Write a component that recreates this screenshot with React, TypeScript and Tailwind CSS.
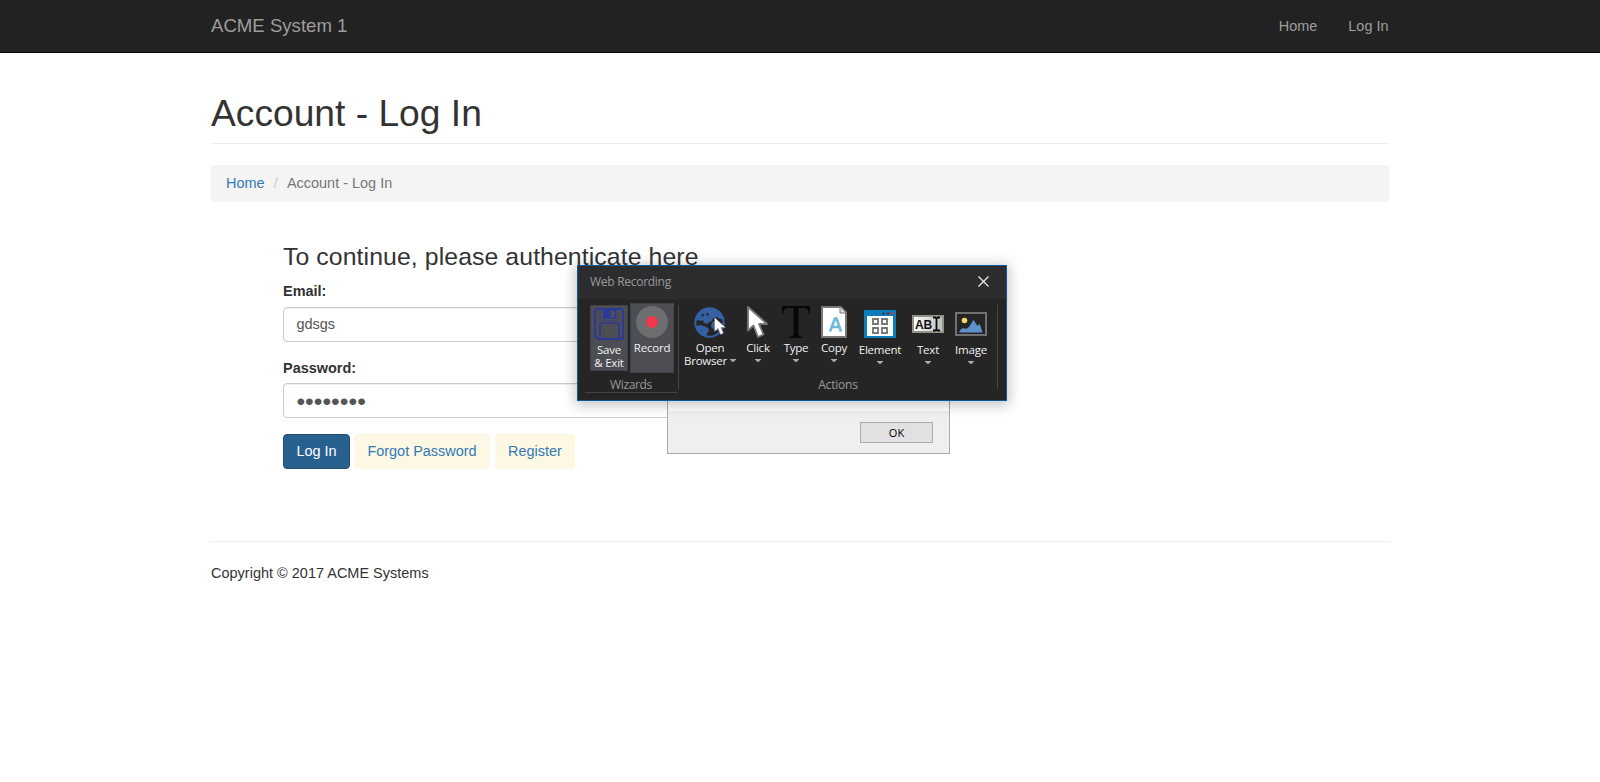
import type { ReactNode } from 'react';

function Arrow({ className = '' }: { className?: string }) {
  return (
    <svg className={`h-[3px] w-[6px] shrink-0 ${className}`} viewBox="0 0 6 3">
      <path d="M0 0h6v.6L3.500 3h-1L0 .6z" fill="#a8a8a8" />
    </svg>
  );
}

type ToolProps = { icon: ReactNode; label: string; className: string };

function Tool({ icon, label, className }: ToolProps) {
  return (
    <div className={`flex shrink-0 flex-col items-center pt-[7px] ${className}`}>
      {icon}
      <span className="mt-[3px] h-[13px] whitespace-nowrap leading-[13px]">{label}</span>
      <Arrow className="mt-[5px]" />
    </div>
  );
}

const cursorPath = 'M1 1v23.500l5.500-5 4.500 11.500 5.500-2.500-4.500-10.500h8z';

function FloppyIcon() {
  return (
    <svg className="h-8 w-[30px] shrink-0" viewBox="0 0 30 32" fill="none" stroke="#2c3a97" strokeWidth="2">
      <path d="M2.500 1h25L29 2.500v27L27.500 31h-23L1 28V2.500z" />
      <path d="M6 1v10.500l1 1h16l1-1V1" strokeWidth="1" strokeOpacity=".45" />
      <path d="M6 31V16l1-1h17l1 1v15" strokeWidth="1.600" />
      <path d="M9 1.500h13V11H9z" fill="#2c3a97" stroke="none" />
      <path d="M17 3h3.500v6.500H17z" fill="#505058" stroke="none" />
    </svg>
  );
}

function RecordIcon() {
  return (
    <svg className="size-8 shrink-0" viewBox="0 0 32 32">
      <circle cx="16" cy="16" r="16" fill="#6d6e6f" />
      <circle cx="16" cy="16" r="6" fill="#f0384f" />
    </svg>
  );
}

function GlobeIcon() {
  return (
    <svg className="h-8 w-8 shrink-0" viewBox="0 0 32 32">
      <circle cx="15.500" cy="16.500" r="14.200" fill="none" stroke="#3560a4" strokeWidth="2" />
      <path d="M5 7C8 3 12 2 16 2c6 0 10 3 12.500 7.500L30 14l-4-1-3-2-4 1-1 3-3 1-2 2-3-1-1-3-2 1-2-1-3 1z" fill="#3560a4" />
      <path d="M2 20l4-1 4 1 4 2 1 3-2 2v3l-5-2-5-4zM18 16l4-1 6 3 1 4-3 3-5-1-4-3z" fill="#3560a4" />
      <path d="M7 9l2-1.500 1.500 1.500-2 2zM12 7.500l2.500-.5.5 2-2 1z" fill="#252d3b" />
      <path d="M20.500 11.500v14l3.500-3 2.500 6 3-1.300-2.500-5.700h4.500z" fill="#fff" stroke="#68717e" strokeWidth=".5" />
    </svg>
  );
}

function ClickIcon() {
  return (
    <svg className="h-8 w-[22px] shrink-0" viewBox="0 0 22 32">
      <path d={cursorPath} fill="#fff" stroke="#777" strokeWidth="1.800" strokeLinejoin="round" />
    </svg>
  );
}

function TypeIcon() {
  return (
    <svg className="h-8 w-7 shrink-0" viewBox="0 0 28 32">
      <path d="M0 0h28v8h-1c-.6-4.500-2-6-6-6h-4.500v25c0 3 1 3.700 4.500 4v1H7v-1c3.500-.3 4.500-1 4.500-4V2H7C3 2 1.600 3.500 1 8H0z" fill="#070707" />
    </svg>
  );
}

function CopyIcon() {
  return (
    <svg className="h-8 w-[26px] shrink-0" viewBox="0 0 26 32">
      <path d="M1 1h18.500L25 6.500V31H1z" fill="#fff" stroke="#777" strokeWidth="2" />
      <path d="M19 1v6h6" fill="#ddd" stroke="#777" strokeWidth="1" />
      <path d="M9 25.500l5-13h1.500l4.500 13M11 21h8" fill="none" stroke="#72b9df" strokeWidth="2.700" />
    </svg>
  );
}

function ElementIcon() {
  return (
    <svg className="h-[34px] w-8 shrink-0" viewBox="0 0 32 34">
      <rect y="4" width="32" height="28" rx=".5" fill="#0e7dbb" />
      <path d="M3 10h26v20H3z" fill="#fff" />
      <path d="M18 7.500h3M19.500 6v3M22.500 7.500h3M24 6v3" stroke="#383e50" strokeWidth="1" />
      <path d="M26.500 6h2.500v3h-2.500z" fill="#bd3651" />
      <g fill="none" stroke="#777" strokeWidth="1.900">
        <path d="M9 13h5v5H9zM18 13h5v5h-5zM9 22h5v5H9zM18 22h5v5h-5z" />
      </g>
    </svg>
  );
}

function TextIcon() {
  return (
    <svg className="h-[34px] w-8 shrink-0" viewBox="0 0 32 34">
      <defs>
        <linearGradient id="plate">
          <stop offset="0" stopColor="#fff" />
          <stop offset="1" stopColor="#bbb" />
        </linearGradient>
      </defs>
      <rect x="1" y="10" width="30" height="16" fill="url(#plate)" stroke="#92938b" strokeWidth="2" />
      <text x="3" y="22.500" fontFamily="Liberation Sans, sans-serif" fontWeight="700" fontSize="12.500" textLength="17" lengthAdjust="spacingAndGlyphs" fill="#111">AB</text>
      <path d="M21 11.500h2l1.500 1 1.500-1h2M21 24.500h2l1.500-1 1.500 1h2M24.500 12v12" fill="none" stroke="#080808" strokeWidth="1.800" />
    </svg>
  );
}

function ImageIcon() {
  return (
    <svg className="h-[34px] w-8 shrink-0" viewBox="0 0 32 34">
      <rect x="1" y="7" width="30" height="22" fill="#252526" stroke="#717273" strokeWidth="2" />
      <circle cx="9.500" cy="14.500" r="2.800" fill="#f3d774" />
      <path d="M4 26.500l2-3.500 3-1 2 1 3-2 4.500-7 4 6 1.500-2 1.500 2 2 6.500z" fill="#6290cd" />
    </svg>
  );
}

function RecorderWindow() {
  return (
    <section className="absolute left-[577px] top-[265px] flex h-[136px] w-[430px] flex-col border border-[#075a9b] bg-[#252526] font-['Open_Sans','Noto_Sans',sans-serif] text-[11.5px] tracking-[-0.22px] text-[#f1f1f1] shadow-[0_2px_12px_2px_rgba(0,0,0,0.24)]">
      <header className="flex h-[33px] shrink-0 items-center justify-between bg-[#2d2d30] pl-3 pr-[17.5px]">
        <span className="pb-px text-[12px] leading-4 tracking-[-0.28px] text-[#999]">Web Recording</span>
        <svg className="mb-[2px] size-[11px]" viewBox="0 0 11 11" stroke="#eee" strokeWidth="1.200">
          <path d="M.5.5l10 10M10.500.5l-10 10" />
        </svg>
      </header>
      <div className="flex h-[101px]">
        <div className="mb-[7px] ml-[7px] flex w-[92px] flex-col border-b border-[#434346]">
          <div className="flex h-[79px] items-start pl-[5px]">
            <div className="mt-[6px] flex h-[66px] w-[38px] flex-col items-center border border-[#424248] bg-[#4d4d54] pt-[2px]">
              <FloppyIcon />
              <span className="mt-[3px] whitespace-nowrap text-center leading-[13px]">Save<br />&amp; Exit</span>
            </div>
            <div className="ml-[2px] mt-1 flex h-[70px] w-[44px] flex-col items-center border border-[#424248] bg-[#4d4d54] pt-[2px]">
              <RecordIcon />
              <span className="mt-[3px] leading-[13px]">Record</span>
            </div>
          </div>
          <span className="text-center text-[12px] leading-[13px] tracking-[-0.35px] text-[#999]">Wizards</span>
        </div>
        <div className="ml-px mt-[6px] h-[84px] w-px bg-[#464648]" />
        <div className="flex w-[318px] flex-col">
          <div className="flex h-[79px] items-start">
            <div className="-ml-px mr-px flex w-16 shrink-0 flex-col items-center pt-[7px]">
              <GlobeIcon />
              <span className="mt-[3px] leading-[13px]">Open</span>
              <span className="flex items-center gap-[3px] leading-[13px]">Browser<Arrow /></span>
            </div>
            <Tool className="w-[30px]" icon={<ClickIcon />} label="Click" />
            <Tool className="ml-px mr-px w-[44px]" icon={<TypeIcon />} label="Type" />
            <Tool className="w-[30px]" icon={<CopyIcon />} label="Copy" />
            <Tool className="ml-2 w-[46px]" icon={<ElementIcon />} label="Element" />
            <Tool className="ml-2 w-[34px]" icon={<TextIcon />} label="Text" />
            <Tool className="ml-[5px] w-[42px]" icon={<ImageIcon />} label="Image" />
          </div>
          <span className="text-center text-[12px] leading-[13px] tracking-[-0.2px] text-[#999]">Actions</span>
        </div>
        <div className="mt-[6px] h-[84px] w-px bg-[#464648]" />
      </div>
    </section>
  );
}

function AlertWindow() {
  return (
    <section className="absolute left-[667px] top-[320px] flex h-[134px] w-[283px] flex-col border border-[#aaa] bg-white">
      <footer className="mt-auto flex h-[42px] items-start justify-end bg-[#efefef] pr-4 pt-[11px]">
        <button className="h-[21px] w-[73px] border border-[#adadad] bg-[#e1e1e1] font-['Open_Sans',sans-serif] text-[11px] leading-[19px] text-black">OK</button>
      </footer>
    </section>
  );
}

export default function App() {
  return (
    <div className="relative h-[782px] overflow-hidden bg-white font-['Liberation_Sans',Arial,sans-serif] text-[14.46px] leading-[20.66px] text-[#333]">
      <nav className="h-[53px] border-b border-[#080808] bg-[#222] text-[#9d9d9d]">
        <div className="mx-auto flex h-[52px] w-[1178px] items-center justify-between">
          <a className="text-[18.6px]">ACME System 1</a>
          <div className="-ml-px flex gap-[31px] pr-[0.5px]">
            <a>Home</a>
            <a>Log In</a>
          </div>
        </div>
      </nav>
      <main className="mx-auto w-[1178px]">
        <h1 className="mt-[39px] h-[52px] border-b border-[#eee] pt-px text-[37.2px] leading-[41px]">Account - Log In</h1>
        <div className="mt-[21px] flex h-[37px] items-center rounded-[4px] bg-[#f4f4f4] pl-[15px]">
          <a className="text-[#337ab7]">Home</a>
          <span className="px-[9.2px] text-[#ccc]">/</span>
          <span className="text-[#777]">Account - Log In</span>
        </div>
        <form className="ml-[72px] pt-[41px]">
          <h3 className="text-[24.8px] leading-[27px] tracking-[0.09px]">To continue, please authenticate here</h3>
          <label className="mb-[5px] mt-[11px] block font-bold leading-[21px]">Email:</label>
          <input
            className="block h-[35px] w-[520px] rounded-[4px] border border-[#ccc] bg-white px-[12.4px] pb-[2px] text-[14.46px] text-[#555] shadow-[inset_0_1px_1px_rgba(0,0,0,0.075)] outline-none"
            defaultValue="gdsgs"
          />
          <label className="mb-1 mt-4 block font-bold leading-[21px]">Password:</label>
          <input
            className="block h-[35px] w-[520px] rounded-[4px] border border-[#ccc] bg-white px-[12.4px] pt-[2px] text-[24.8px] text-[#555] shadow-[inset_0_1px_1px_rgba(0,0,0,0.075)] outline-none"
            type="password"
            defaultValue="password"
          />
          <div className="mt-4 flex h-[35px] text-[14.46px]">
            <button type="button" className="w-[67px] rounded-[4px] border border-[#204d74] bg-[#286090] text-white">Log In</button>
            <button type="button" className="ml-[4px] w-[136px] rounded-[4px] bg-[#fcf8e3] text-[#337ab7]">Forgot Password</button>
            <button type="button" className="ml-[5px] w-[80px] rounded-[4px] bg-[#fcf8e3] text-[#337ab7]">Register</button>
          </div>
        </form>
        <footer className="mt-[72px] border-t border-[#eee] pt-[21px] tracking-[0.02px]">Copyright © 2017 ACME Systems</footer>
      </main>
      <AlertWindow />
      <RecorderWindow />
    </div>
  );
}
